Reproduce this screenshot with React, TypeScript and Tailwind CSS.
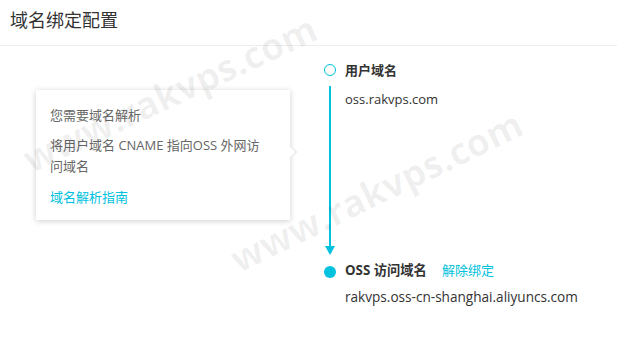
const font = { fontFamily: '"Open Sans", "Noto Sans CJK SC", sans-serif' };

const App = () => {
  return (
    <div className="relative w-[617px] h-[337px] overflow-hidden bg-white text-[13px]" style={font}>
      {/* Header */}
      <div className="h-[46px] border-b border-[#eeeeee] pl-[10px] pt-[7px]">
        <h1 className="text-[18px] leading-[26px] text-[#333]">域名绑定配置</h1>
      </div>

      <div className="flex pt-[16px]">
        {/* Tip popover */}
        <div className="w-[320px] pl-[36px] pt-[28px]">
          <div className="relative w-[254px] bg-white shadow-[0_1px_6px_rgba(0,0,0,0.2)] px-[14px] pt-[15px] pb-[13px] text-[#666]">
            <p className="leading-[20px]">您需要域名解析</p>
            <p className="mt-[10px] leading-[21px]">
              将用户域名 CNAME 指向OSS 外网访
              <br />
              问域名
            </p>
            <a className="block mt-[10px] leading-[20px] text-[#00c1de]">域名解析指南</a>
            <span className="absolute right-[-5px] top-[57px] w-[10px] h-[10px] rotate-45 bg-white border-t border-r border-[#e6e6e6]" />
          </div>
        </div>

        {/* Steps */}
        <div className="flex">
          <div className="flex flex-col items-center w-[20px]">
            <span className="mt-[2px] w-[12px] h-[12px] rounded-full border-[1.5px] border-[#00c1de]" />
            <span className="mt-[10px] w-[2px] h-[160px] bg-[#00c1de]" />
            <span className="w-0 h-0 border-l-[5px] border-r-[5px] border-t-[9px] border-l-transparent border-r-transparent border-t-[#00c1de]" />
            <span className="mt-[11px] w-[12px] h-[12px] rounded-full bg-[#00c1de]" />
          </div>
          <div className="flex flex-col pl-[5px] text-[#333]">
            <div className="font-bold leading-[16px]">用户域名</div>
            <div className="mt-[13px] leading-[16px]">oss.rakvps.com</div>
            <div className="mt-[155px] flex items-center leading-[16px]">
              <span className="font-bold text-[13.3px]">OSS 访问域名</span>
              <a className="ml-[15px] text-[#00c1de]">解除绑定</a>
            </div>
            <div className="mt-[11px] leading-[16px] text-[13.6px]">rakvps.oss-cn-shanghai.aliyuncs.com</div>
          </div>
        </div>
      </div>

      {/* Watermarks */}
      <div className="pointer-events-none absolute left-[33px] top-[140px] origin-bottom-left -rotate-[25deg] text-[37px] leading-[38px] font-bold text-black/[0.06] whitespace-nowrap">
        www.rakvps.com
      </div>
      <div className="pointer-events-none absolute left-[241px] top-[240px] origin-bottom-left -rotate-[26deg] text-[37px] leading-[38px] font-bold text-black/[0.06] whitespace-nowrap">
        www.rakvps.com
      </div>
    </div>
  );
};

export default App;
